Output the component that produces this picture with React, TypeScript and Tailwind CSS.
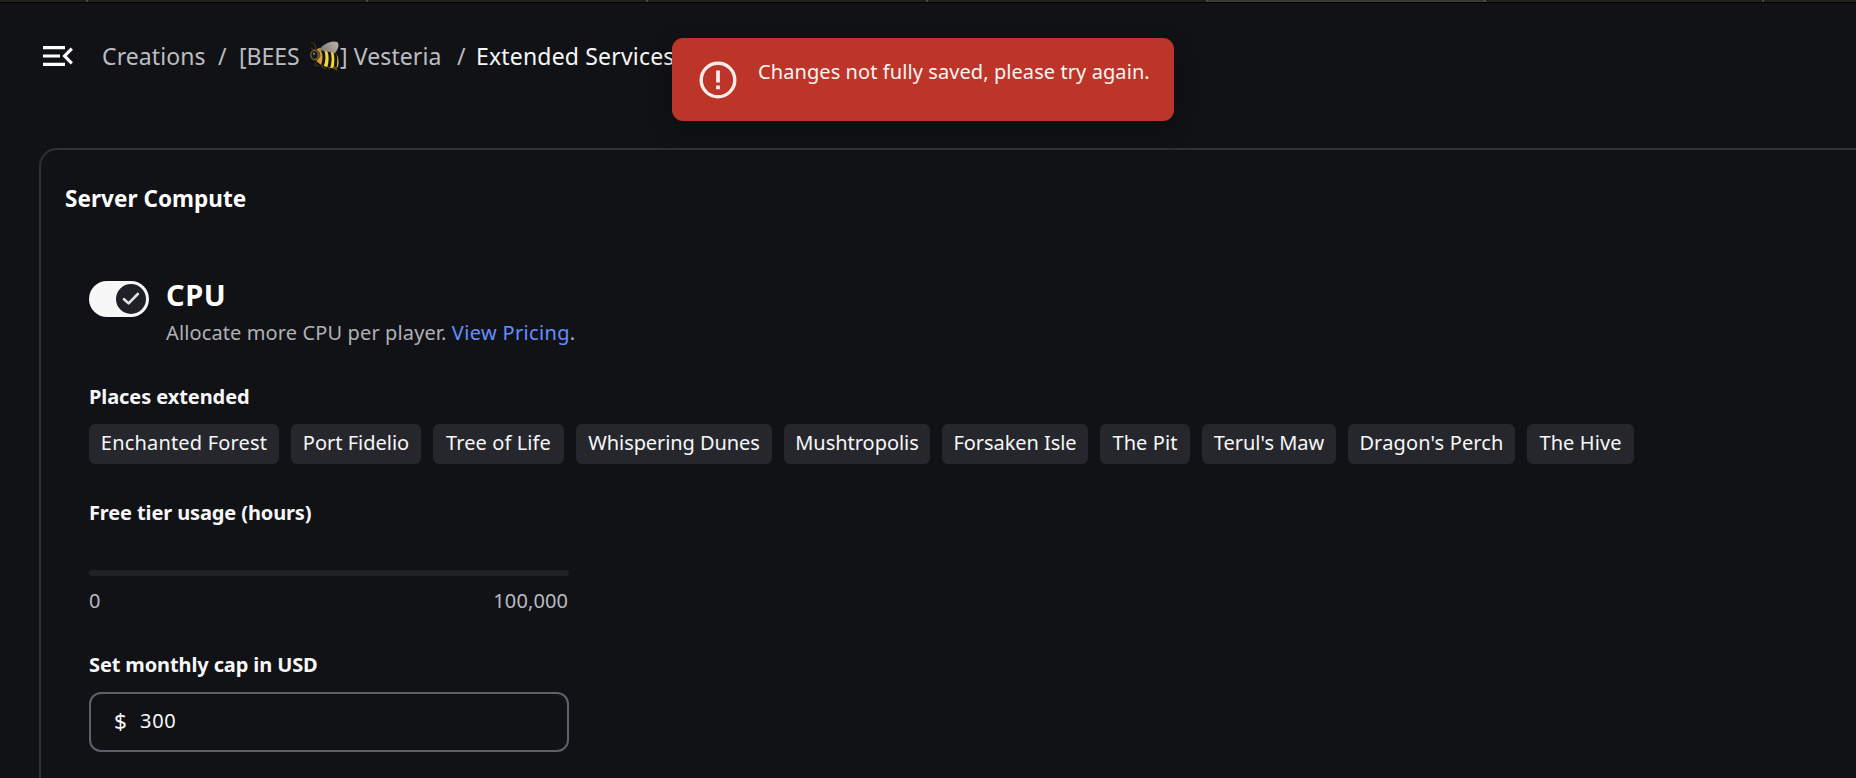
const places: { name: string; chip: string }[] = [
  { name: "Enchanted Forest", chip: "w-[190px] tracking-[0.18px]" },
  { name: "Port Fidelio", chip: "w-[130px]" },
  { name: "Tree of Life", chip: "w-[131px] tracking-[0.1px]" },
  { name: "Whispering Dunes", chip: "w-[196px] tracking-[-0.08px]" },
  { name: "Mushtropolis", chip: "w-[146px] tracking-[-0.03px]" },
  { name: "Forsaken Isle", chip: "w-[146px] tracking-[-0.05px]" },
  { name: "The Pit", chip: "w-[90px] tracking-[0.1px]" },
  { name: "Terul's Maw", chip: "w-[134px]" },
  { name: "Dragon's Perch", chip: "w-[167px] tracking-[0.15px]" },
  { name: "The Hive", chip: "w-[107px] tracking-[0.1px]" },
];

function BrowserTabs() {
  return (
    <div className="flex h-[3px] shrink-0 border-b border-black bg-[#1f201f]">
      <div className="w-[88px] shrink-0 border-r-2 border-[#474747]" />
      <div className="w-[280px] shrink-0 border-r-2 border-[#474747]" />
      <div className="w-[280px] shrink-0 border-r-2 border-[#474747]" />
      <div className="w-[280px] shrink-0 border-r-2 border-[#474747]" />
      <div className="w-[280px] shrink-0 border-r-2 border-[#474747]" />
      <div className="w-[278px] shrink-0 border-r-2 border-[#4c4c4c] bg-[#3a3a3a]" />
      <div className="w-[278px] shrink-0 border-r-2 border-[#474747]" />
    </div>
  );
}

function MenuIcon() {
  return (
    <svg className="h-[20px] w-[30px] shrink-0" viewBox="0 0 30 20" fill="none">
      <path d="M0 1.6H22M0 10H17M0 18.4H22" stroke="#fff" strokeWidth="3.2" />
      <path d="M28.8 2.6L21.6 10L28.8 17.4" stroke="#fff" strokeWidth="3.2" />
    </svg>
  );
}

function Bee() {
  return (
    <svg className="h-[30px] w-[30px] shrink-0" viewBox="0 0 30 30" fill="none">
      <defs>
        <clipPath id="abdomen">
          <path d="M7 8C13 6 23 8 27 14C29 18 29 24 27 27C20 28 11 25 7 20Z" />
        </clipPath>
        <linearGradient id="wing" x1="14" y1="11" x2="27" y2="2" gradientUnits="userSpaceOnUse">
          <stop stopColor="#858078" />
          <stop offset="1" stopColor="#b5afa5" />
        </linearGradient>
      </defs>
      <path d="M1 2C4 1 6 4 5.5 8M1 7L4 9M7 20L5 24L9 25M11 22L12 26L16 28M17 24L20 29" stroke="#443714" strokeWidth="1.1" />
      <g clipPath="url(#abdomen)">
        <path d="M6 6H30V30H6Z" fill="#f2d93a" />
        <path d="M6 7H13V24H6Z" fill="#cf9f33" />
        <path d="M12 8Q16 16 12 26M18.5 9Q22 18 18 29M25 11Q27 20 24.5 29" stroke="#17130b" strokeWidth="3" />
      </g>
      <path d="M25 25L28 30L22 27Z" fill="#665016" />
      <ellipse cx="5.2" cy="14" rx="5.2" ry="5.8" fill="#6b5525" />
      <ellipse cx="4.5" cy="14" rx="2.9" ry="3.7" fill="#17191c" />
      <circle cx="4" cy="12.8" r="1" fill="#8a8b88" />
      <path d="M9 9C13 3 21-1 27 1C30 3 28 9 25 12C20 11 14 10 9 9Z" fill="url(#wing)" />
    </svg>
  );
}

function Toast() {
  return (
    <div className="absolute left-[672px] top-[38px] flex h-[83px] w-[502px] rounded-[11px] bg-[#bd3428] pl-[27px] shadow-[0_8px_24px_rgba(0,0,0,0.3)]">
      <svg className="mt-[23px] h-[38px] w-[38px] shrink-0" viewBox="0 0 38 38" fill="none">
        <circle cx="19" cy="19" r="16.8" stroke="#fdeceb" strokeWidth="3.4" />
        <path d="M19 9.5V21.500M19 24.5V28.3" stroke="#fdeceb" strokeWidth="3.8" />
      </svg>
      <p className="ml-[21px] mt-[20px] whitespace-nowrap text-[20px] leading-[28px] tracking-[0.08px] text-[#fff5f4]">
        Changes not fully saved, please try again.
      </p>
    </div>
  );
}

function Toggle() {
  return (
    <button
      role="switch"
      aria-checked="true"
      className="mt-[7px] flex h-[36px] w-[60px] shrink-0 items-center justify-end rounded-full bg-[#f7f7f8] pr-[3px]"
    >
      <span className="flex h-[30px] w-[30px] items-center justify-center rounded-full bg-[#202127]">
        <svg className="h-[14px] w-[18px]" viewBox="0 0 18 14" fill="none">
          <path d="M2 7.2L6.6 11.4L15.8 2" stroke="#e4e4e6" strokeWidth="2.6" strokeLinecap="round" strokeLinejoin="round" />
        </svg>
      </span>
    </button>
  );
}

export default function App() {
  return (
    <div className="relative flex h-[778px] w-[1856px] flex-col overflow-hidden bg-[#111216] font-['Noto_Sans',sans-serif] text-[#f7f7f8]">
      <BrowserTabs />
      <header className="flex h-[145px] shrink-0 items-start pl-[43px] pt-[37px]">
        <div className="flex h-[32px] items-center">
          <MenuIcon />
        </div>
        <nav className="ml-[29px] flex h-[32px] items-center whitespace-nowrap text-[23px] leading-[32px] text-[#bcbdc0]">
          <span className="w-[116px] tracking-[0.1px]">Creations</span>
          <span className="w-[21px]">/</span>
          <span className="w-[71px]">[BEES</span>
          <Bee />
          <span className="w-[117px] tracking-[0.1px]">] Vesteria</span>
          <span className="w-[19px]">/</span>
          <span className="tracking-[0.18px] text-[#f7f7f8]">Extended Services</span>
        </nav>
      </header>
      <main className="ml-[39px] flex w-[1900px] grow flex-col rounded-tl-[18px] border-l-2 border-t-2 border-[#2f3034] pl-[24px] pt-[33px]">
        <h1 className="text-[22.5px] font-bold leading-[32px] tracking-[0.05px] text-white">Server Compute</h1>
        <div className="ml-[24px] mt-[59px] flex flex-col">
          <section className="flex gap-[17px]">
            <Toggle />
            <div className="whitespace-nowrap">
              <h2 className="pt-px text-[29px] font-bold leading-[40px] tracking-[0.6px] text-white">CPU</h2>
              <p className="mt-[4px] text-[20px] leading-[28px] tracking-[0.12px] text-[#b0b1b4]">
                Allocate more CPU per player.{" "}
                <a className="tracking-[0.34px] text-[#648eff]">View Pricing</a>.
              </p>
            </div>
          </section>
          <h3 className="mt-[36px] text-[20px] font-bold leading-[28px] tracking-[-0.08px]">Places extended</h3>
          <div className="mt-[13px] flex gap-[12px]">
            {places.map((place) => (
              <span
                key={place.name}
                className={`h-[40px] shrink-0 whitespace-nowrap rounded-[6px] bg-[#26272c] text-center text-[20px] leading-[38px] ${place.chip}`}
              >
                {place.name}
              </span>
            ))}
          </div>
          <h3 className="mt-[35px] text-[20px] font-bold leading-[28px] tracking-[-0.12px]">Free tier usage (hours)</h3>
          <div className="mt-[43px] h-[6px] w-[480px] rounded-full bg-[#202128]" />
          <div className="mt-[11px] flex w-[480px] justify-between pr-[1px] text-[20px] leading-[28px] text-[#b9bac3]">
            <span>0</span>
            <span className="tracking-[0.1px]">100,000</span>
          </div>
          <h3 className="mt-[36px] text-[20px] font-bold leading-[28px] tracking-[-0.12px]">Set monthly cap in USD</h3>
          <div className="mt-[13px] flex h-[60px] w-[480px] items-center rounded-[12px] border-2 border-[#5d606d] pb-[3px] pl-[23px]">
            <span className="w-[26px] text-[22.5px] leading-[28px]">$</span>
            <span className="text-[20px] leading-[28px] tracking-[0.7px]">300</span>
          </div>
        </div>
      </main>
      <Toast />
    </div>
  );
}
